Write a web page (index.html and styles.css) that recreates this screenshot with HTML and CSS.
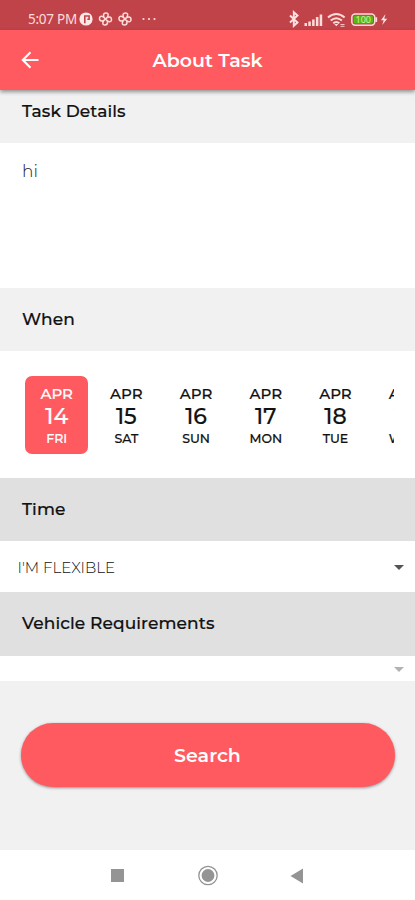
FILE: index.html
```html
<!DOCTYPE html>
<html lang="en">
<head>
<meta charset="utf-8">
<meta name="viewport" content="width=device-width, initial-scale=1">
<title>About Task</title>
<link rel="stylesheet" href="styles.css">
</head>
<body>
<div class="status">
  <span class="clock">5:07 PM</span>
  <svg class="notices" width="80" height="16" viewBox="0 0 80 16">
    <circle cx="7" cy="8" r="6.600" fill="#ffe9e6"/>
    <path d="M5.800 12.300V5h4.300v3.300H8.300" fill="none" stroke="#c1434a" stroke-width="1.600"/>
    <g id="fan" fill="none" stroke="#ffdcd9" stroke-width="1.500">
      <path d="M26.500 8C23.500 5.500 24 2 27 2S30 5.500 26.500 8C29 5 32.500 5.500 32.500 8.500S29 11.500 26.500 8C29.500 10.500 29 14 26 14S23 10.500 26.500 8C24 11 20.500 10.500 20.500 7.500S24 4.500 26.500 8Z"/>
    </g>
    <use href="#fan" x="19.500"/>
    <g fill="#ffdcd9"><circle cx="64.500" cy="8" r="1.100"/><circle cx="70" cy="8" r="1.100"/><circle cx="75.500" cy="8" r="1.100"/></g>
  </svg>
  <svg class="signals" width="102" height="18" viewBox="0 0 102 18">
    <path d="M3 5.500l7.500 7L6.800 15.800V2.200l3.700 3.300L3 12.500" fill="none" stroke="#ffe2df" stroke-width="1.900"/>
    <g fill="#ffdcd9"><path d="M17.500 13H20v3h-2.500zM21.300 11.500h2.500V16h-2.500zM25.100 9.500h2.500V16h-2.500zM28.900 7h2.500v9h-2.500zM32.700 4.500h2.500V16h-2.500z"/></g>
    <g fill="none" stroke="#ffdcd9" stroke-width="2"><path d="M41 7.500q8.300-7 16.600 0M43.700 10.600q5.600-4.700 11.200 0M46.300 13.200q3-2.500 6 0"/></g>
    <path d="M47.300 14h4l-2 2.300z" fill="#ffdcd9"/>
    <path d="M53.500 14.500h4M53.500 16.300h4" stroke="#ffc4c2" stroke-width="1"/>
    <rect x="64.800" y="4" width="23" height="11.200" rx="3.400" fill="#c1434a" stroke="#ffdcd9" stroke-width="1.500"/>
    <rect x="66.600" y="5.800" width="19.400" height="7.600" rx="1.700" fill="#58b51d"/>
    <path d="M89.300 7.300v4.600" stroke="#ffdcd9" stroke-width="1.700"/>
    <text x="76.300" y="12.600" text-anchor="middle" class="charge">100</text>
    <path d="M98.500 4L94 10.300h2.700L95.200 15l5-6.300h-3z" fill="#ffe9e6"/>
  </svg>
</div>
<header class="appbar">
  <svg class="back" width="20" height="20" viewBox="0 0 20 20"><path d="M18.500 10H3M10.500 2.200L2.800 10l7.700 7.800" fill="none" stroke="#fff" stroke-width="2.100"/></svg>
  <h1>About Task</h1>
</header>
<main>
  <h2 class="heading details"><span>Task Details</span></h2>
  <div class="note">hi</div>
  <h2 class="heading when"><span>When</span></h2>
  <div class="dates">
    <div class="strip">
      <div class="day active"><span class="month">APR</span><span class="num">14</span><span class="week">FRI</span></div>
      <div class="day"><span class="month">APR</span><span class="num">15</span><span class="week">SAT</span></div>
      <div class="day"><span class="month">APR</span><span class="num">16</span><span class="week">SUN</span></div>
      <div class="day"><span class="month">APR</span><span class="num">17</span><span class="week">MON</span></div>
      <div class="day"><span class="month">APR</span><span class="num">18</span><span class="week">TUE</span></div>
      <div class="day"><span class="month">APR</span><span class="num">19</span><span class="week">WED</span></div>
    </div>
  </div>
  <h2 class="heading dark time"><span>Time</span></h2>
  <div class="select"><span>I'M FLEXIBLE</span><i class="caret"></i></div>
  <h2 class="heading dark vehicle"><span>Vehicle Requirements</span></h2>
  <div class="select empty"><i class="caret"></i></div>
  <div class="action"><button>Search</button></div>
</main>
<nav>
  <svg width="415" height="50" viewBox="0 0 415 50">
    <rect x="111" y="19" width="13" height="13" fill="#949494"/>
    <circle cx="208" cy="25.500" r="9.200" fill="none" stroke="#949494" stroke-width="1.300"/>
    <circle cx="208" cy="25.500" r="6.400" fill="#949494"/>
    <path d="M303 18.500v15L290.500 26z" fill="#949494"/>
  </svg>
</nav>
</body>
</html>
```
FILE: styles.css
```css
* { box-sizing: border-box; }
body {
  margin: 0;
  width: 415px;
  height: 900px;
  overflow: hidden;
  display: flex;
  flex-direction: column;
  background: #fff;
  color: #111;
  font-family: Montserrat, Inter, sans-serif;
}
.status {
  height: 30px;
  flex: none;
  display: flex;
  align-items: center;
  padding: 8px 26px 0 28px;
  background: #c1434a;
  color: #ffdcd9;
}
.clock { font: 13.5px/20px "Noto Sans", sans-serif; width: 51px; white-space: nowrap; letter-spacing: -.25px; }
.signals { margin-left: auto; }
.charge { font: 9px "Noto Sans", sans-serif; fill: #c9f5a4; }
.appbar {
  height: 60px;
  flex: none;
  display: grid;
  grid-template-columns: 60px 1fr 60px;
  align-items: center;
  background: #ff5a60;
  box-shadow: 0 2px 4px rgba(0, 0, 0, .4);
  z-index: 1;
}
.back { margin-left: 20px; }
h1 { margin: 0; padding-top: 2px; text-align: center; color: #fff; font-size: 19px; line-height: 26px; font-weight: 600; }
.heading {
  margin: 0;
  height: 63px;
  padding: 0 0 2px 22px;
  display: flex;
  align-items: center;
  background: #f1f1f1;
  font-size: 17px;
  font-weight: 500;
  letter-spacing: .1px;
  -webkit-text-stroke: .2px #111;
}
.dark { background: #e0e0e0; }
.details { height: 53px; padding-bottom: 11px; }
.note { height: 145px; padding: 17px 22px; font-size: 17px; line-height: 22px; font-weight: 300; color: #222; }
.dates { height: 127px; padding: 24.500px 21.500px 0 25px; }
.strip { display: flex; gap: 6.300px; overflow: hidden; }
.day {
  flex: 0 0 63.400px;
  height: 78.500px;
  padding-top: 8px;
  display: flex;
  flex-direction: column;
  align-items: center;
  border-radius: 7px;
  font-weight: 500;
  -webkit-text-stroke: .2px currentColor;
}
.month { font-size: 15px; line-height: 20px; }
.num { font-size: 22px; line-height: 25px; }
.week { font-size: 12.500px; line-height: 19px; }
.active { background: #ff5a60; color: #fff; }
.select { height: 51px; display: flex; align-items: center; justify-content: space-between; padding: 1px 11px 0 17.500px; font-size: 15px; font-weight: 300; }
.caret { margin-left: auto; border: 5.500px solid transparent; border-top-color: #555; border-bottom: 0; }
.vehicle { height: 64px; }
.empty { height: 25px; }
.empty .caret { border-top-color: #b2b2b2; }
.action { height: 169px; padding: 42px 20px 0 21px; background: #f1f1f1; }
button {
  width: 100%;
  height: 64px;
  padding: 0 1px 0 0;
  border: 0;
  border-radius: 32px;
  background: #ff5a60;
  color: #fff;
  font: 600 19px Montserrat, Inter, sans-serif;
  box-shadow: 0 1px 3px rgba(0, 0, 0, .4);
}
nav { height: 50px; }
nav svg { display: block; }
```
